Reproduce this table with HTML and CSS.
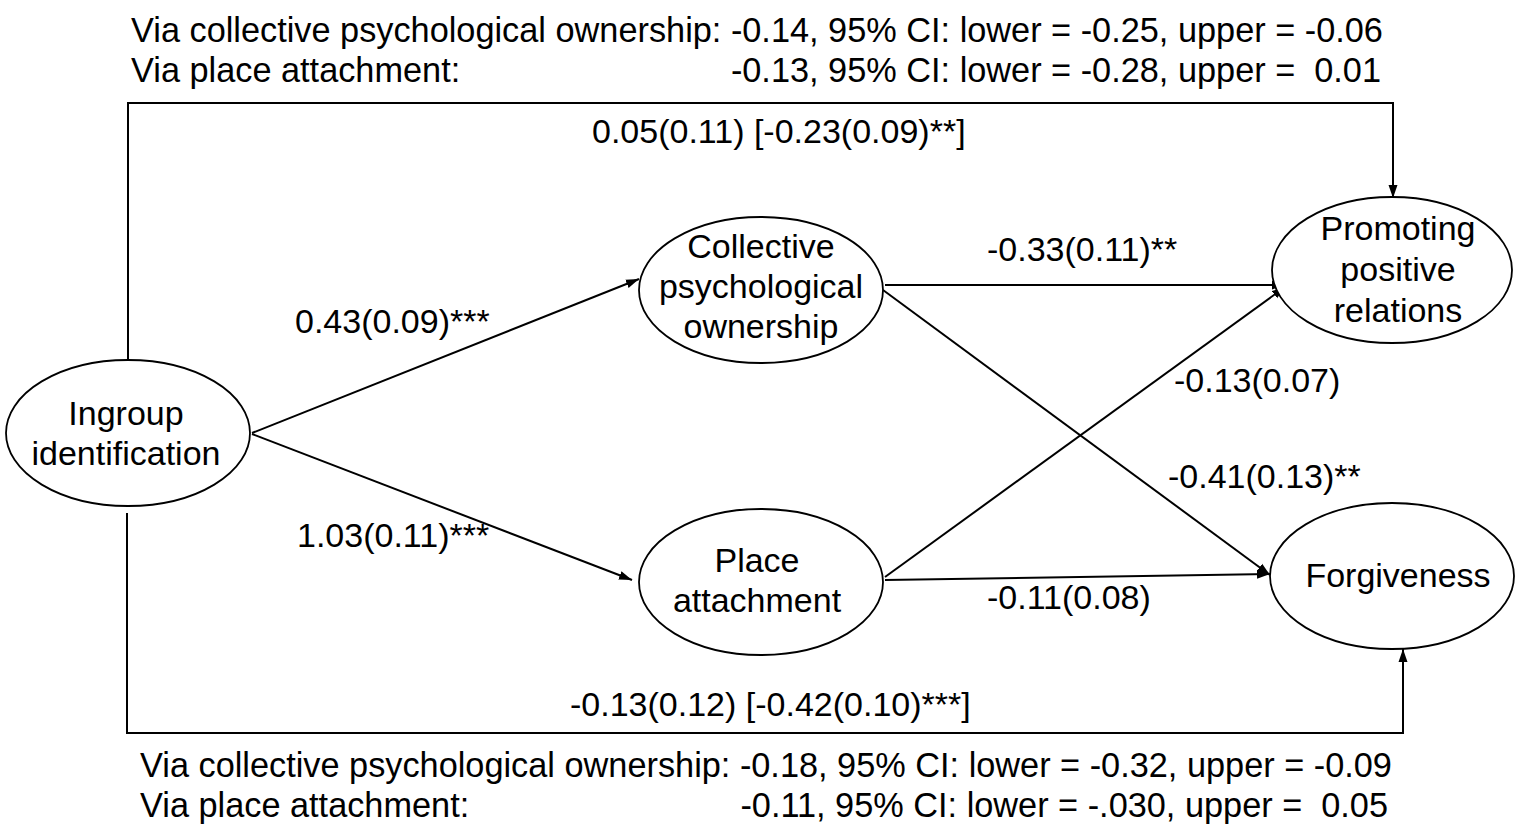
FILE: index.html
```html
<!DOCTYPE html>
<html lang="en">
<head>
<meta charset="utf-8">
<title>Path model</title>
<link rel="stylesheet" href="styles.css">
</head>
<body>
<header class="effects effects-top">
  <div class="effect-row">Via collective psychological ownership: -0.14, 95% CI: lower = -0.25, upper = -0.06</div>
  <div class="effect-row split"><span>Via place attachment:</span><span class="val">-0.13, 95% CI: lower = -0.28, upper =  0.01</span></div>
</header>
<main class="diagram">
  <svg class="edges" width="1535" height="655" viewBox="0 90 1535 655" xmlns="http://www.w3.org/2000/svg">
    <defs>
      <marker id="ah" markerUnits="userSpaceOnUse" markerWidth="14" markerHeight="10" refX="13" refY="5" orient="auto">
        <path d="M0,0.5 L13,5 L0,9.5 Z" fill="#000"/>
      </marker>
    </defs>
    <g fill="none" stroke="#000" stroke-width="2">
      <polyline points="128,360 128,103 1393,103 1393,198" marker-end="url(#ah)"/>
      <polyline points="127,513 127,733 1403,733 1403,649" marker-end="url(#ah)"/>
      <line x1="252" y1="433" x2="639" y2="279" marker-end="url(#ah)"/>
      <line x1="252" y1="434" x2="632" y2="580" marker-end="url(#ah)"/>
      <line x1="885" y1="285" x2="1285" y2="285" marker-end="url(#ah)"/>
      <line x1="883" y1="290" x2="1270" y2="575" marker-end="url(#ah)"/>
      <line x1="885" y1="577" x2="1285" y2="287" marker-end="url(#ah)"/>
      <line x1="885" y1="580" x2="1270" y2="574" marker-end="url(#ah)"/>
    </g>
    <g fill="#fff" stroke="#000" stroke-width="1.8">
      <ellipse cx="128" cy="433" rx="122" ry="73"/>
      <ellipse cx="761" cy="290" rx="122" ry="73"/>
      <ellipse cx="1392" cy="270" rx="120" ry="73"/>
      <ellipse cx="761" cy="582" rx="122" ry="73"/>
      <ellipse cx="1392" cy="576" rx="122" ry="73"/>
    </g>
  </svg>

  <div class="node n-ingroup">Ingroup<br>identification</div>
  <div class="node n-cpo">Collective<br>psychological<br>ownership</div>
  <div class="node n-prom">Promoting<br>positive<br>relations</div>
  <div class="node n-place">Place<br>attachment</div>
  <div class="node n-forg">Forgiveness</div>

  <div class="coef c-top">0.05(0.11) [-0.23(0.09)**]</div>
  <div class="coef c-ig-cpo">0.43(0.09)***</div>
  <div class="coef c-ig-pa">1.03(0.11)***</div>
  <div class="coef c-cpo-pr">-0.33(0.11)**</div>
  <div class="coef c-pa-pr">-0.13(0.07)</div>
  <div class="coef c-cpo-fo">-0.41(0.13)**</div>
  <div class="coef c-pa-fo">-0.11(0.08)</div>
  <div class="coef c-bottom">-0.13(0.12) [-0.42(0.10)***]</div>
</main>
<footer class="effects effects-bottom">
  <div class="effect-row">Via collective psychological ownership: -0.18, 95% CI: lower = -0.32, upper = -0.09</div>
  <div class="effect-row split"><span>Via place attachment:</span><span class="val">-0.11, 95% CI: lower = -.030, upper =  0.05</span></div>
</footer>
</body>
</html>
```

FILE: styles.css
```css
html, body {
  margin: 0;
  padding: 0;
  background: #fff;
}

body {
  width: 1535px;
  height: 835px;
  overflow: hidden;
  font-family: "Liberation Sans", Arial, sans-serif;
  font-size: 34px;
  line-height: 40px;
  color: #000;
}

.effects {
  display: flex;
  flex-direction: column;
  width: 1254px;
  font-size: 34.3px;
}

.effects-top {
  padding: 10px 0 0 131px;
  height: 80px;
}

.effects-bottom {
  padding: 0 0 0 140px;
  height: 80px;
}

.effect-row {
  white-space: pre;
  height: 40px;
}

.effect-row.split {
  display: flex;
  justify-content: space-between;
  padding-right: 4px;
}

.effects-bottom .effect-row.split {
  padding-right: 6px;
}

.diagram {
  position: relative;
  display: block;
  width: 1535px;
  height: 655px;
}

.edges {
  position: absolute;
  top: 0;
  left: 0;
}

.node {
  position: absolute;
  width: 240px;
  text-align: center;
  white-space: nowrap;
}

.n-ingroup { left: 6px; top: 303px; }
.n-cpo { left: 641px; top: 136px; }
.n-prom { left: 1278px; top: 118px; line-height: 41px; }
.n-place { left: 637px; top: 450px; }
.n-forg { left: 1278px; top: 465px; }

.coef {
  position: absolute;
  white-space: nowrap;
}

.c-top { left: 592px; top: 21px; }
.c-ig-cpo { left: 295px; top: 211px; }
.c-ig-pa { left: 297px; top: 425px; }
.c-cpo-pr { left: 987px; top: 139px; }
.c-pa-pr { left: 1174px; top: 270px; }
.c-cpo-fo { left: 1168px; top: 366px; }
.c-pa-fo { left: 987px; top: 487px; }
.c-bottom { left: 570px; top: 594px; }
```
